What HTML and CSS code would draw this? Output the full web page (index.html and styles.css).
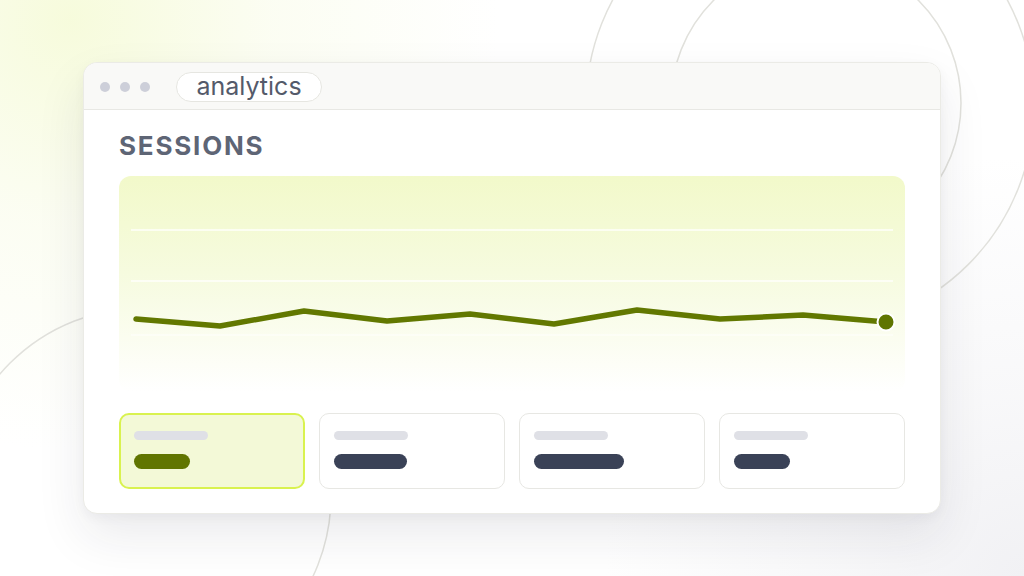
FILE: index.html
```html
<!DOCTYPE html>
<html>
<head>
<meta charset="utf-8">
<link rel="stylesheet" href="styles.css">
</head>
<body>
<div class="page">
  <svg class="rings" width="1024" height="576" viewBox="0 0 1024 576">
    <circle cx="810" cy="106" r="224" />
    <circle cx="816" cy="103" r="145" />
    <circle cx="143" cy="496" r="188" />
  </svg>
  <div class="window">
    <div class="titlebar">
      <div class="dots"><span class="dot"></span><span class="dot"></span><span class="dot"></span></div>
      <div class="tab">analytics</div>
    </div>
    <div class="content">
      <h1 class="heading">SESSIONS</h1>
      <div class="chart">
        <svg class="chart-svg" width="786" height="216" viewBox="0 0 786 216">
          <line class="grid" x1="12" y1="54" x2="774" y2="54" />
          <line class="grid" x1="12" y1="105" x2="774" y2="105" />
          <line class="grid faint" x1="12" y1="159" x2="774" y2="159" />
          <polyline class="series" points="17,143 101,150 185,135 268,145 351,138 435,148 518,134 601,143 684,139 767,146" />
          <circle class="end" cx="767" cy="146" r="8.5" />
        </svg>
      </div>
      <div class="cards">
        <div class="card active"><div class="bar-light"></div><div class="bar-value green" style="width:56px"></div></div>
        <div class="card"><div class="bar-light"></div><div class="bar-value" style="width:73px"></div></div>
        <div class="card"><div class="bar-light"></div><div class="bar-value" style="width:90px"></div></div>
        <div class="card"><div class="bar-light"></div><div class="bar-value" style="width:56px"></div></div>
      </div>
    </div>
  </div>
</div>
</body>
</html>
```

FILE: styles.css
```css
* { box-sizing: border-box; }
html, body { margin: 0; padding: 0; }
body { font-family: Inter, "Noto Sans", sans-serif; }

.page {
  position: relative;
  width: 1024px;
  height: 576px;
  overflow: hidden;
  padding: 62px 0 0 83px;
  background:
    radial-gradient(circle at 70px 20px, rgba(246, 251, 218, 0.95) 0, rgba(249, 252, 232, 0.55) 200px, rgba(255, 255, 255, 0) 430px),
    radial-gradient(circle at 1024px 576px, #f1f1f4 0, rgba(245, 245, 247, 0.7) 180px, rgba(255, 255, 255, 0) 420px),
    #ffffff;
}

.rings {
  position: absolute;
  left: 0;
  top: 0;
}
.rings circle {
  fill: none;
  stroke: #e1e1dc;
  stroke-width: 1.5;
}

.window {
  position: relative;
  width: 858px;
  height: 452px;
  background: #ffffff;
  border: 1px solid #ebebe6;
  border-radius: 14px;
  box-shadow: 0 22px 50px rgba(30, 30, 50, 0.09), 0 4px 12px rgba(30, 30, 50, 0.04);
  overflow: hidden;
}

.titlebar {
  height: 47px;
  background: #f9f9f7;
  border-bottom: 1px solid #e8e8e4;
  display: flex;
  align-items: center;
  padding-left: 16px;
  padding-top: 1px;
}
.dots { display: flex; gap: 10px; }
.dot {
  width: 10px;
  height: 10px;
  border-radius: 50%;
  background: #cdcfd9;
}
.tab {
  margin-left: 26px;
  height: 30px;
  width: 146px;
  border: 1.5px solid #e6e6e1;
  border-radius: 15px;
  background: #ffffff;
  display: flex;
  align-items: center;
  justify-content: center;
  font-size: 25px;
  color: #545a6a;
  padding-bottom: 2px;
}

.content {
  padding: 20px 35px 24px 35px;
}
.heading {
  margin: 0;
  font-size: 26px;
  line-height: 32px;
  font-weight: 700;
  letter-spacing: 1.8px;
  color: #5e6575;
}

.chart {
  margin-top: 14px;
  height: 216px;
  border-radius: 12px;
  background: linear-gradient(180deg, #f2f9ca 0%, #f6fbdf 45%, #fbfdf0 75%, #ffffff 100%);
}
.chart-svg { display: block; }
.grid { stroke: rgba(255, 255, 255, 0.9); stroke-width: 1.5; }
.grid.faint { stroke: rgba(255, 255, 255, 0.6); }
.series {
  fill: none;
  stroke: #627800;
  stroke-width: 5.5;
  stroke-linejoin: round;
  stroke-linecap: round;
}
.end { fill: #5f7500; stroke: #ffffff; stroke-width: 2; }

.cards {
  margin-top: 21px;
  display: grid;
  grid-template-columns: repeat(4, 1fr);
  gap: 14px;
}
.card {
  height: 76px;
  border: 1.5px solid #e7e7e3;
  border-radius: 10px;
  background: #ffffff;
  padding: 17px 14px 0 14px;
}
.card.active {
  background: #f3f9d7;
  border: 2px solid #d9f24f;
  padding: 16px 13px 0 13px;
}
.bar-light {
  width: 74px;
  height: 9px;
  border-radius: 5px;
  background: #dfe0e6;
}
.bar-value {
  margin-top: 14px;
  height: 15px;
  border-radius: 8px;
  background: #3a4257;
}
.bar-value.green { background: #607500; }
```
